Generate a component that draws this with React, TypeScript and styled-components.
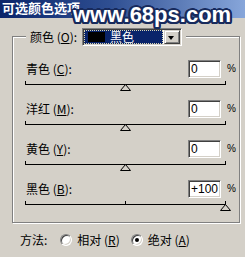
import React, { FC } from "react";
import styled, { createGlobalStyle } from "styled-components";

const GlobalStyle = createGlobalStyle`
  html, body {
    margin: 0;
    padding: 0;
    background: #d4d0c8;
  }
  body {
    font-family: "Noto Sans CJK SC", "Liberation Sans", sans-serif;
    font-size: 12px;
    color: #000;
  }
`;

const Dialog = styled.div`
  position: relative;
  width: 245px;
  height: 257px;
  overflow: hidden;
  background: #d4d0c8;
`;

const TitleBar = styled.div`
  height: 18px;
  box-sizing: border-box;
  padding: 0 0 0 2px;
  background: linear-gradient(90deg, #0a246a 0%, #2f4f92 45%, #87a6da 100%);
  color: #fff;
  font-weight: bold;
  font-size: 13px;
  line-height: 16px;
  white-space: nowrap;
`;

const Watermark = styled.div`
  position: absolute;
  left: 73px;
  top: 4px;
  font-family: "Liberation Sans", Arial, sans-serif;
  font-weight: bold;
  font-size: 22px;
  line-height: 22px;
  color: #fff;
  white-space: nowrap;
  pointer-events: none;
  text-shadow: 2px 0 0 #172a5c, -2px 0 0 #172a5c, 0 2px 0 #172a5c,
    0 -2px 0 #172a5c, 1.5px 1.5px 0 #172a5c, -1.5px 1.5px 0 #172a5c,
    1.5px -1.5px 0 #172a5c, -1.5px -1.5px 0 #172a5c, 2px 1px 0 #172a5c,
    -2px 1px 0 #172a5c, 2px -1px 0 #172a5c, -2px -1px 0 #172a5c;
`;

const GroupBox = styled.div`
  margin: 18px 0 0 12px;
  width: 228px;
  height: 187px;
  box-sizing: border-box;
  border: 1px solid #808080;
  box-shadow: 1px 1px 0 #fff, inset 1px 1px 0 #fff;
  display: flex;
  flex-direction: column;
`;

const Legend = styled.div`
  align-self: flex-start;
  margin: -9px 0 0 13px;
  padding: 0 4px;
  height: 18px;
  display: flex;
  align-items: center;
  gap: 5px;
  background: #d4d0c8;
`;

const Label = styled.span`
  font-size: 12px;
  line-height: 18px;
  white-space: nowrap;
`;

const Key = styled.span`
  text-decoration: underline;
`;

const Select = styled.div`
  width: 100px;
  height: 18px;
  box-sizing: border-box;
  display: flex;
  padding: 1px;
  border-style: solid;
  border-width: 1px;
  border-color: #808080 #fff #fff #808080;
  box-shadow: inset 1px 1px 0 #404040, inset -1px -1px 0 #d4d0c8;
  background: #fff;
`;

const Selected = styled.div`
  flex: 1;
  display: flex;
  align-items: center;
  margin-right: 1px;
  border: 1px dotted #d9d6b4;
  background: #0a246a;
  color: #fff;
`;

const Swatch = styled.span`
  width: 17px;
  height: 10px;
  margin-left: 3px;
  background: #000;
`;

const SelectText = styled.span`
  margin-left: 5px;
  font-size: 12px;
  line-height: 12px;
`;

const ArrowButton = styled.div`
  position: relative;
  width: 16px;
  box-sizing: border-box;
  border-style: solid;
  border-width: 1px;
  border-color: #d4d0c8 #404040 #404040 #d4d0c8;
  box-shadow: inset 1px 1px 0 #fff, inset -1px -1px 0 #808080;
  background: #d4d0c8;

  &::after {
    content: "";
    position: absolute;
    left: 3px;
    top: 5px;
    border-style: solid;
    border-width: 4px 3.5px 0 3.5px;
    border-color: #000 transparent transparent transparent;
  }
`;

const Rows = styled.div`
  margin-top: 14px;
  display: flex;
  flex-direction: column;
`;

const Row = styled.div`
  height: 40px;
  display: flex;
  flex-direction: column;
`;

const RowHeader = styled.div`
  height: 18px;
  display: flex;
  align-items: center;
  padding: 0 4px 0 13px;
`;

const RowLabel = styled(Label)`
  flex: 1;
`;

const ValueInput = styled.input`
  width: 33px;
  height: 18px;
  box-sizing: border-box;
  margin: 0;
  padding: 0 0 0 2px;
  border-style: solid;
  border-width: 1px;
  border-color: #808080 #fff #fff #808080;
  box-shadow: inset 1px 1px 0 #404040, inset -1px -1px 0 #d4d0c8;
  background: #fff;
  font-family: "Liberation Sans", Arial, sans-serif;
  font-size: 12px;
  color: #000;
  outline: none;
`;

const Percent = styled.span`
  margin-left: 6px;
  width: 8px;
  font-family: "Liberation Sans", Arial, sans-serif;
  font-size: 10px;
  line-height: 18px;
`;

const Track = styled.div<{ $centerTick: boolean }>`
  position: relative;
  margin: 3px 0 0 12px;
  width: 201px;
  height: 4px;
  box-sizing: border-box;
  border-left: 1px solid #000;
  border-right: 1px solid #000;
  border-bottom: 1px solid #000;

  &::after {
    content: "";
    display: ${(p) => (p.$centerTick ? "block" : "none")};
    position: absolute;
    left: 99px;
    top: 0;
    width: 1px;
    height: 3px;
    background: #000;
  }
`;

const Thumb = styled.svg`
  position: absolute;
  top: 3px;
  width: 11px;
  height: 7px;
  display: block;
`;

const MethodRow = styled.div`
  margin-top: 8px;
  height: 18px;
  display: flex;
  align-items: center;
  padding-left: 20px;
`;

const MethodLabel = styled(Label)`
  margin-right: 13px;
`;

const Option = styled.label<{ $gapAfter?: number }>`
  display: flex;
  align-items: center;
  gap: 5px;
  margin-right: ${(p) => p.$gapAfter ?? 0}px;
`;

const Radio = styled.span<{ $checked?: boolean }>`
  position: relative;
  width: 12px;
  height: 12px;
  box-sizing: border-box;
  border-radius: 50%;
  border-style: solid;
  border-width: 1px;
  border-color: #808080 #fff #fff #808080;
  box-shadow: inset 1px 1px 0 #404040, inset -1px -1px 0 #d4d0c8;
  background: #fff;

  &::after {
    content: "";
    display: ${(p) => (p.$checked ? "block" : "none")};
    position: absolute;
    left: 3px;
    top: 3px;
    width: 4px;
    height: 4px;
    border-radius: 50%;
    background: #000;
  }
`;

const TRACK_W = 201;

const colors = [
  { name: "青色", key: "C", value: 0 },
  { name: "洋红", key: "M", value: 0 },
  { name: "黄色", key: "Y", value: 0 },
  { name: "黑色", key: "B", value: 100 },
];

const Slider: FC<{ value: number }> = ({ value }) => {
  const pct = (value + 100) / 200;
  const left = Math.round(pct * (TRACK_W - 1)) - 6;
  return (
    <Track $centerTick={value !== 0}>
      <Thumb viewBox="0 0 11 7" style={{ left }}>
        <polygon
          points="5.5,0.5 10.5,6.5 0.5,6.5"
          fill="#d4d0c8"
          stroke="#000"
          strokeWidth="1"
        />
      </Thumb>
    </Track>
  );
};

const App: FC = () => {
  return (
    <Dialog>
      <GlobalStyle />
      <TitleBar>可选颜色选项</TitleBar>
      <GroupBox>
        <Legend>
          <Label>
            颜色 (<Key>O</Key>):
          </Label>
          <Select>
            <Selected>
              <Swatch />
              <SelectText>黑色</SelectText>
            </Selected>
            <ArrowButton />
          </Select>
        </Legend>
        <Rows>
          {colors.map((c) => (
            <Row key={c.key}>
              <RowHeader>
                <RowLabel>
                  {c.name} (<Key>{c.key}</Key>):
                </RowLabel>
                <ValueInput
                  readOnly
                  value={c.value > 0 ? `+${c.value}` : `${c.value}`}
                />
                <Percent>%</Percent>
              </RowHeader>
              <Slider value={c.value} />
            </Row>
          ))}
        </Rows>
      </GroupBox>
      <MethodRow>
        <MethodLabel>方法:</MethodLabel>
        <Option $gapAfter={11}>
          <Radio />
          <Label>
            相对 (<Key>R</Key>)
          </Label>
        </Option>
        <Option>
          <Radio $checked />
          <Label>
            绝对 (<Key>A</Key>)
          </Label>
        </Option>
      </MethodRow>
      <Watermark>www.68ps.com</Watermark>
    </Dialog>
  );
};

export default App;
